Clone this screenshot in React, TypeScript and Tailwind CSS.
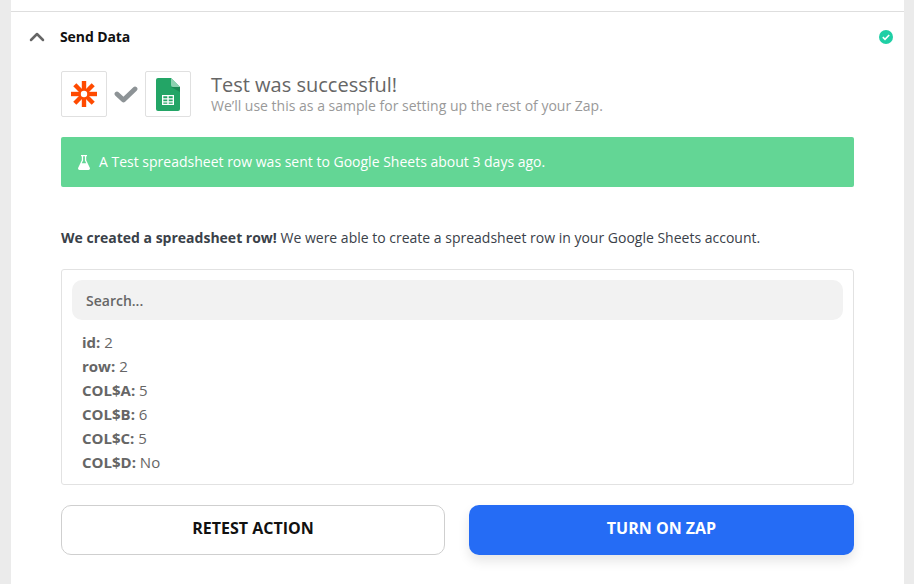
import React from 'react';
import { ChevronUp } from 'lucide-react';

const FIELDS = [
  { label: 'id:', value: '2' },
  { label: 'row:', value: '2' },
  { label: 'COL$A:', value: '5' },
  { label: 'COL$B:', value: '6' },
  { label: 'COL$C:', value: '5' },
  { label: 'COL$D:', value: 'No' },
];

const ZapierLogo = () => (
  <svg width="26" height="26" viewBox="0 0 26 26">
    <g fill="#ff4a00">
      <rect x="0" y="10.800" width="26" height="4.400" />
      <rect x="0" y="10.800" width="26" height="4.400" transform="rotate(45 13 13)" />
      <rect x="0" y="10.800" width="26" height="4.400" transform="rotate(90 13 13)" />
      <rect x="0" y="10.800" width="26" height="4.400" transform="rotate(135 13 13)" />
    </g>
    <circle cx="13" cy="13" r="3.200" fill="#fff" />
  </svg>
);

const SheetsLogo = () => (
  <svg width="24" height="33" viewBox="0 0 24 33">
    <path d="M2 0H15L24 9V31a2 2 0 0 1-2 2H2a2 2 0 0 1-2-2V2a2 2 0 0 1 2-2z" fill="#23a566" />
    <path d="M15 0L24 9H17a2 2 0 0 1-2-2z" fill="#8ed1b1" />
    <path d="M15 9L24 14V9z" fill="#1c8a55" />
    <path d="M6 17H18V27H6z" fill="#fff" />
    <path d="M7.300 20.200H11.300V18.300H7.300zM12.700 20.200H16.700V18.300H12.700zM7.300 23.300H11.300V21.500H7.300zM12.700 23.300H16.700V21.500H12.700zM7.300 25.800H11.300V24.600H7.300zM12.700 25.800H16.700V24.600H12.700z" fill="#23a566" />
  </svg>
);

const Flask = () => (
  <svg width="12" height="15" viewBox="0 0 12 15" fill="#fff">
    <path d="M3 0H9V1.200H8.200V5.200L11.800 12.800C12.300 13.900 11.600 15 10.500 15H1.500C.4 15 -.3 13.900 .2 12.800L3.800 5.200V1.200H3zM5.100 1.200V5.500L3.800 8.300H8.200L6.900 5.500V1.200z" fillRule="evenodd" />
  </svg>
);

export default function App() {
  return (
    <div className="h-[584px] w-[914px] overflow-hidden bg-[#ebebeb] px-[11px] font-['Open_Sans',sans-serif]">
      <div className="h-full w-[893px] bg-white">
        <div className="h-[12px] border-b border-[#dedede]" />

        <div className="flex h-[50px] items-center pr-[11px]">
          <ChevronUp className="ml-[14px] h-[24px] w-[24px] text-[#666]" strokeWidth={2.5} />
          <span className="mb-[2px] ml-[11px] text-[14px] font-bold tracking-[-0.1px] text-[#111]">Send Data</span>
          <svg className="ml-auto" width="14" height="14" viewBox="0 0 14 14">
            <circle cx="7" cy="7" r="7" fill="#1fcfa5" />
            <path d="M3.800 7.200L6 9.300L10.200 5" fill="none" stroke="#fff" strokeWidth="1.600" />
          </svg>
        </div>

        <div className="px-[50px]">
          <div className="mt-[9px] flex h-[46px] items-center">
            <div className="flex h-[46px] w-[46px] items-center justify-center rounded-[2px] border border-[#e0e0e0]">
              <ZapierLogo />
            </div>
            <svg className="mx-[7px]" width="24" height="18" viewBox="0 0 24 18">
              <path d="M3 9L9.500 15L21 4" fill="none" stroke="#8d9396" strokeWidth="4.800" strokeLinecap="round" strokeLinejoin="round" />
            </svg>
            <div className="flex h-[46px] w-[46px] items-center justify-center rounded-[2px] border border-[#e0e0e0]">
              <SheetsLogo />
            </div>
            <div className="mb-[3px] ml-[20px]">
              <div className="text-[20px] leading-[26px] text-[#666]">Test was successful!</div>
              <div className="text-[14px] leading-[16px] text-[#999]">We’ll use this as a sample for setting up the rest of your Zap.</div>
            </div>
          </div>

          <div className="mt-[20px] flex h-[50px] items-center rounded-[2px] bg-[#63d695] pl-[17px] text-[14px] text-white">
            <Flask />
            <span className="mb-[2px] ml-[9px]">A Test spreadsheet row was sent to Google Sheets about 3 days ago.</span>
          </div>

          <p className="mt-[41px] text-[14px] leading-[20px] text-[#3a4149]">
            <strong className="font-bold">We created a spreadsheet row!</strong> We were able to create a spreadsheet row in your Google Sheets account.
          </p>

          <div className="mt-[21px] h-[216px] rounded-[3px] border border-[#e2e2e2] px-[10px] pt-[10px]">
            <div className="flex h-[40px] items-center rounded-[10px] bg-[#f2f2f2] pl-[14px] text-[14px] font-semibold text-[#666]">Search...</div>
            <div className="mt-[10px] pl-[10px] text-[15px] leading-[24px] text-[#666]">
              {FIELDS.map(f => (
                <div key={f.label}>
                  <strong className="font-bold">{f.label}</strong> {f.value}
                </div>
              ))}
            </div>
          </div>

          <div className="mt-[20px] flex gap-[24px]">
            <button className="h-[50px] w-[384px] rounded-[10px] border border-[#cfcfcf] bg-white pb-[5px] text-[16px] font-bold text-[#111]">RETEST ACTION</button>
            <button className="h-[50px] w-[385px] rounded-[10px] bg-[#256cf5] pb-[5px] text-[16px] font-bold text-white shadow-[0_6px_12px_rgba(0,0,0,0.1)]">TURN ON ZAP</button>
          </div>
        </div>
      </div>
    </div>
  );
}
